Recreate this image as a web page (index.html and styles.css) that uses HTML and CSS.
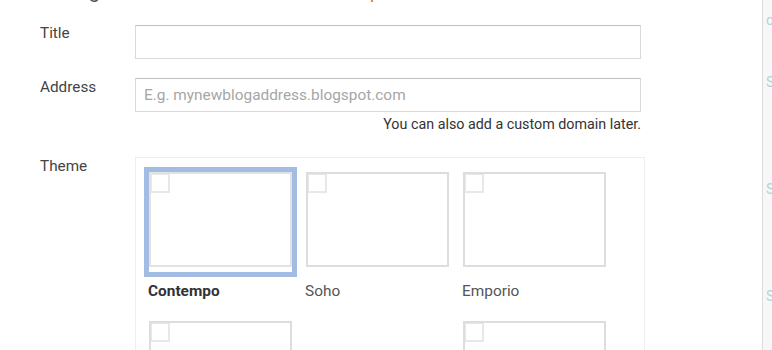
FILE: index.html
```html
<!DOCTYPE html>
<html lang="en">
<head>
    <meta charset="UTF-8">
    <meta name="viewport" content="width=device-width, initial-scale=1.0">
    <title>New blog</title>
    <link rel="stylesheet" href="styles.css">
</head>
<body>
    <div class="page">
        <main class="dialog">
            <div class="heading">
                <div class="heading-text">
                    <span class="heading-title">Blog</span>
                    <span class="heading-link">Help</span>
                </div>
            </div>

            <div class="row">
                <label class="label" for="title">Title</label>
                <input class="field" type="text" id="title">
            </div>

            <div class="row row-address">
                <label class="label" for="address">Address</label>
                <div>
                    <input class="field" type="text" id="address" placeholder="E.g. mynewblogaddress.blogspot.com">
                    <p class="hint">You can also add a custom domain later.</p>
                </div>
            </div>

            <div class="row row-theme">
                <span class="label">Theme</span>
                <div class="themes">
                    <div class="theme selected">
                        <div class="thumb"><span class="thumb-icon"></span></div>
                        <div class="theme-name">Contempo</div>
                    </div>
                    <div class="theme">
                        <div class="thumb"><span class="thumb-icon"></span></div>
                        <div class="theme-name">Soho</div>
                    </div>
                    <div class="theme">
                        <div class="thumb"><span class="thumb-icon"></span></div>
                        <div class="theme-name">Emporio</div>
                    </div>
                    <div class="theme">
                        <div class="thumb"><span class="thumb-icon"></span></div>
                        <div class="theme-name">Notable</div>
                    </div>
                    <div class="theme empty">
                        <div class="thumb"></div>
                    </div>
                    <div class="theme">
                        <div class="thumb"><span class="thumb-icon"></span></div>
                        <div class="theme-name">Simple</div>
                    </div>
                </div>
            </div>
        </main>

        <aside class="sidebar">
            <span class="side-item side-first">c</span>
            <span class="side-item">S</span>
            <span class="side-item">S</span>
            <span class="side-item">S</span>
        </aside>
    </div>
</body>
</html>
```

FILE: styles.css
```css
:root {
    --label-color: #444;
    --text-color: #333;
    --field-border: #dadada;
    --field-top: #bfbfbf;
    --thumb-border: #dddddd;
    --selected: #a3bce4;
    --accent: #f57c00;
    --side-text: #acd6da;
}
body {
    margin: 0;
    background: #fff;
    font-family: Roboto, 'Noto Sans', sans-serif;
    color: var(--text-color);
    overflow: hidden;
}
.page {
    display: flex;
    height: 350px;
    overflow: hidden;
}
.dialog {
    width: 762px;
    flex: none;
}
.heading {
    height: 25px;
    overflow: hidden;
}
.heading-text {
    margin-top: -21px;
    font-size: 20px;
    line-height: 24px;
    white-space: nowrap;
}
.heading-title {
    margin-left: 60px;
    color: #555;
}
.heading-link {
    margin-left: 235px;
    color: var(--accent);
}
.row {
    display: grid;
    grid-template-columns: 95px 506px;
    padding-left: 40px;
    align-items: start;
}
.row-address {
    margin-top: 19px;
}
.row-theme {
    margin-top: 24px;
    grid-template-columns: 95px 510px;
}
.label {
    font-size: 15.3px;
    line-height: 20px;
    margin-top: -2px;
    color: var(--label-color);
}
.row-address .label,
.row-theme .label {
    margin-top: -1px;
}
.field {
    display: block;
    box-sizing: border-box;
    width: 506px;
    height: 34px;
    margin: 0;
    padding: 0 8px;
    border: 1px solid var(--field-border);
    border-top-color: var(--field-top);
    border-radius: 0;
    font-family: inherit;
    font-size: 15.4px;
    color: var(--text-color);
    outline: none;
}
.field::placeholder {
    color: #a6a6a6;
}
.hint {
    margin: 3px 0 0;
    text-align: right;
    font-size: 14.3px;
    line-height: 18px;
    color: var(--text-color);
}
.themes {
    display: grid;
    grid-template-columns: repeat(3, 153px);
    column-gap: 4px;
    row-gap: 16px;
    padding: 9px 0 0 8px;
    height: 200px;
    border: 1px solid #eeeeee;
    border-bottom: none;
}
.theme {
    width: 153px;
}
.thumb {
    position: relative;
    box-sizing: border-box;
    width: 153px;
    height: 110px;
    padding: 0 0 5px;
    border: 5px solid transparent;
}
.thumb-icon {
    display: block;
    box-sizing: border-box;
    width: 20px;
    height: 20px;
    margin: 1px 0 0 1px;
    border: 2px solid #e8e8e8;
}
.thumb::after {
    content: '';
    position: absolute;
    left: 0;
    top: 0;
    width: 143px;
    height: 95px;
    box-sizing: border-box;
    border: 2px solid var(--thumb-border);
}
.selected .thumb {
    border-color: var(--selected);
}
.selected .thumb::after {
    border-color: #e2e2e2;
}
.empty .thumb::after {
    display: none;
}
.theme-name {
    margin: 5px 0 0 4px;
    font-size: 15.4px;
    line-height: 18px;
    color: #555;
}
.selected .theme-name {
    font-weight: 700;
    color: #333;
}
.sidebar {
    flex: 1;
    display: flex;
    flex-direction: column;
    padding-left: 3px;
    border-left: 1px solid #dcdcdc;
    background: #f7f7f7;
    font-size: 14px;
    line-height: 16px;
    color: var(--side-text);
    overflow: hidden;
}
.side-item {
    margin-top: 91px;
}
.side-first {
    margin-top: 12px;
}
.side-item:nth-child(2) {
    margin-top: 46px;
}
```
